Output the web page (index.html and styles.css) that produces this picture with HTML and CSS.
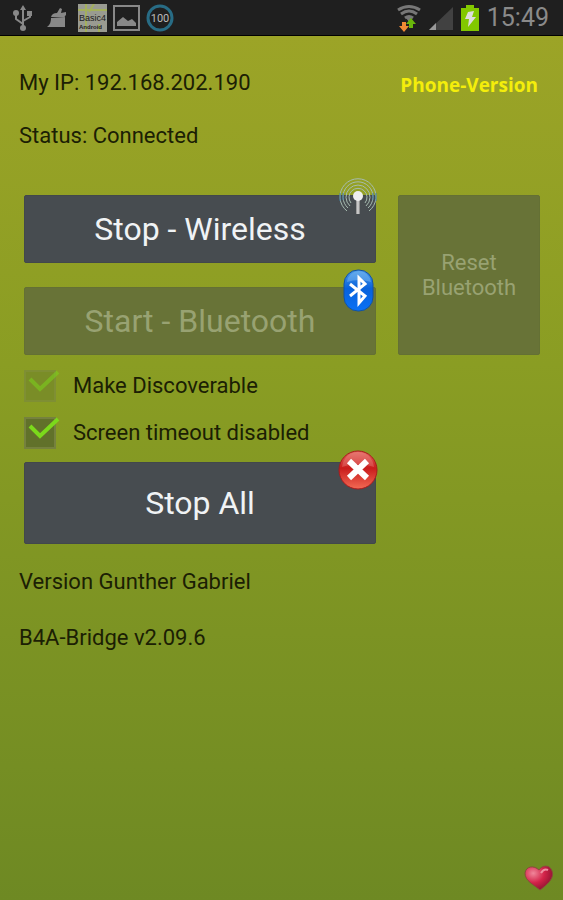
FILE: index.html
```
<!DOCTYPE html>
<html lang="en">
<head>
    <meta charset="UTF-8">
    <meta name="viewport" content="width=device-width, initial-scale=1">
    <title>B4A-Bridge</title>
    <link rel="stylesheet" href="styles.css">
</head>
<body>
    <header class="status-bar">
        <div class="status-group notifications">
            <svg width="22" height="28" viewBox="0 0 22 28" fill="none" stroke="#888" stroke-width="2">
                <path d="M11 4v20M11 20l-7-5V9M11 17l7-4V9"/>
                <path d="M11 1l3 5H8zM15 7h5v5h-5z" fill="#888" stroke="none"/>
                <circle cx="4" cy="9" r="3" fill="#888" stroke="none"/>
                <circle cx="11" cy="24" r="3" fill="#888" stroke="none"/>
            </svg>
            <svg width="22" height="28" viewBox="0 0 22 28" fill="#888">
                <path d="M5 13q1-4 6-4l3-5 2 1-1 4 5-1v3q-2 1-1 3z"/>
                <path d="M5 14h14v9H1c3-2 4-5 4-9z"/>
            </svg>
            <svg width="29" height="28" viewBox="0 0 29 28">
                <path d="M0 0h29v28H0z" fill="#999b91"/>
                <path d="M8 0v28M0 6h29M16 0l-5 8M21 20v8" stroke="#a3b05c" stroke-width="2"/>
                <text class="app-text" x="1" y="17" font-size="9">Basic4</text>
                <text class="app-text app-text-bold" x="1" y="25" font-size="6">Android</text>
            </svg>
            <svg width="27" height="28" viewBox="0 0 27 28">
                <path d="M1 2h25v24H1z" fill="none" stroke="#888" stroke-width="2"/>
                <path d="M4 22v-4l6-5 5 4 4-2 4 4v3z" fill="#888"/>
            </svg>
            <svg width="28" height="28" viewBox="0 0 28 28">
                <circle cx="14" cy="14" r="12" fill="none" stroke="#286c85" stroke-width="3"/>
                <text class="level-text" x="14" y="18" text-anchor="middle" font-size="11">100</text>
            </svg>
        </div>
        <div class="status-group system">
            <svg width="24" height="28" viewBox="0 0 24 28" fill="none" stroke="#777" stroke-width="3">
                <path d="M1 6q11-7 22 0M4 10q8-6 16 0M8 14q4-3 8 0"/>
                <path d="M9 14h6l-3 4z" fill="#777" stroke="none"/>
                <path d="M5 18h4v4h3l-5 6-5-6h3z" fill="#f08a35" stroke="none"/>
                <path d="M12 24v-4H9l5-6 5 6h-3v4z" fill="#69b60b" stroke="none"/>
            </svg>
            <svg width="24" height="28" viewBox="0 0 24 28">
                <path d="M0 26L24 3v23z" fill="#414141"/>
                <path d="M0 26l7-7v7z" fill="#999"/>
            </svg>
            <svg width="18" height="28" viewBox="0 0 18 28">
                <path d="M5 1h8v3h5v23H0V4h5z" fill="#82c800"/>
                <path d="M7 8l6-1-2 6h4L7 23l1-8H4z" fill="#ddd"/>
            </svg>
            <time class="clock">15:49</time>
        </div>
    </header>

    <main class="screen">
        <div class="info">
            <p>My IP: 192.168.202.190</p>
            <strong class="edition">Phone-Version</strong>
        </div>
        <p class="info">Status: Connected</p>

        <div class="controls">
            <div class="button-wrap">
                <button type="button">Stop - Wireless</button>
                <svg class="badge" width="40" height="44" viewBox="0 0 40 44">
                    <defs>
                        <linearGradient id="pole">
                            <stop offset="0" stop-color="#888"/>
                            <stop offset=".5" stop-color="#ddd"/>
                            <stop offset="1" stop-color="#777"/>
                        </linearGradient>
                    </defs>
                    <g fill="none" stroke="#a7bcb0" stroke-width="1">
                        <path d="M9 35a18 18 0 1 1 22 0"/>
                        <path d="M10 32a15 15 0 1 1 20 0"/>
                        <path d="M12 30a12 12 0 1 1 16 0"/>
                        <path d="M13 27a9 9 0 1 1 14 0"/>
                    </g>
                    <path d="M2 17v8M5 17v7M35 17v7M38 17v8" stroke="#3e7ca0" stroke-width="1"/>
                    <path d="M18 24h4v14h-4z" fill="url(#pole)"/>
                    <circle cx="20" cy="20" r="5" fill="#eee"/>
                </svg>
            </div>
            <button class="reset" type="button" disabled>Reset<br>Bluetooth</button>
            <div class="button-wrap">
                <button type="button" disabled>Start - Bluetooth</button>
                <svg class="badge" width="40" height="44" viewBox="0 0 40 44">
                    <defs>
                        <linearGradient id="blue" x2="0" y2="1">
                            <stop offset="0" stop-color="#4a9be8"/>
                            <stop offset=".45" stop-color="#0862dc"/>
                            <stop offset="1" stop-color="#0871f5"/>
                        </linearGradient>
                    </defs>
                    <rect x="6" y="2" width="29" height="41" rx="14" fill="url(#blue)" stroke="#14539f"/>
                    <path d="M9 14q1-10 12-11 10 1 12 11-12-4-24 0z" fill="#8fc5f2" opacity=".4"/>
                    <path d="M12 16l15 12-6 7V10l6 6-15 12" fill="none" stroke="#fff" stroke-width="3"/>
                </svg>
            </div>
        </div>

        <div class="options">
            <label class="option">
                <span class="check">
                    <input type="checkbox" checked disabled>
                    <svg class="tick" width="36" height="32" viewBox="0 0 36 32"><path d="M6 9l10 10L34 2"/></svg>
                </span>
                Make Discoverable
            </label>
            <label class="option">
                <span class="check">
                    <input type="checkbox" checked>
                    <svg class="tick" width="36" height="32" viewBox="0 0 36 32"><path d="M6 9l10 10L34 2"/></svg>
                </span>
                Screen timeout disabled
            </label>
        </div>

        <div class="controls">
            <div class="button-wrap">
                <button class="stop-all" type="button">Stop All</button>
                <svg class="badge" width="40" height="44" viewBox="0 0 40 44">
                    <defs>
                        <linearGradient id="red" x2="0" y2="1">
                            <stop offset="0" stop-color="#e46a62"/>
                            <stop offset=".45" stop-color="#c91b1b"/>
                            <stop offset="1" stop-color="#f26a54"/>
                        </linearGradient>
                    </defs>
                    <circle cx="20" cy="21" r="19" fill="url(#red)" stroke="#a91a1c"/>
                    <path d="M4 18q2-14 16-15 14 1 16 15-16-6-32 0z" fill="#f3a09a" opacity=".3"/>
                    <path d="M11 12l18 17M29 12L11 29" stroke="#fff" stroke-width="6"/>
                </svg>
            </div>
        </div>

        <footer class="about">
            <p>Version Gunther Gabriel</p>
            <p>B4A-Bridge v2.09.6</p>
        </footer>

        <svg class="heart" width="30" height="28" viewBox="0 0 30 28">
            <defs>
                <radialGradient id="heart" cx=".3" cy=".3" r=".8">
                    <stop offset="0" stop-color="#f0869a"/>
                    <stop offset=".5" stop-color="#d32349"/>
                    <stop offset="1" stop-color="#86102e"/>
                </radialGradient>
            </defs>
            <path d="M15 6C18 1 25 1 27 5c5 8-3 15-11 21C9 20 1 17 1 9 2 2 10 1 15 6z" fill="url(#heart)" stroke="#8b4a3c"/>
            <path d="M17 9q3-5 7-3" fill="none" stroke="#ee8ca0" stroke-width="2"/>
        </svg>
    </main>
</body>
</html>
```
FILE: styles.css
```
* {
    box-sizing: border-box;
}

body {
    display: flex;
    flex-direction: column;
    min-height: 100vh;
    margin: 0;
    font-family: Roboto, Arial, sans-serif;
    font-size: 22px;
    color: #1b2004;
    background-color: #8c9e22;
}

p {
    margin: 0;
}

/* Status bar */
.status-bar {
    display: flex;
    justify-content: space-between;
    height: 36px;
    padding: 0 14px 0 12px;
    background-color: #1f1f1f;
    border-bottom: 1px solid #000;
}

.status-group {
    display: flex;
    align-items: center;
}

.notifications {
    gap: 6px;
}

.notifications svg:nth-child(2) {
    margin: 0 4px 0 6px;
}

.system {
    gap: 8px;
}

.clock {
    font-size: 25px;
    color: #8a8a8a;
}

.app-text {
    font-family: "Liberation Sans", sans-serif;
    fill: #202020;
}

.app-text-bold {
    font-weight: bold;
}

.level-text {
    fill: #bbb;
}

/* Main screen */
.screen {
    flex: 1;
    display: flex;
    flex-direction: column;
    padding: 20px 19px 8px;
    background: linear-gradient(#9ca427, #8a9d23 38%, #6e8923);
}

.info {
    display: flex;
    justify-content: space-between;
    align-items: center;
    line-height: 53px;
}

.edition {
    padding: 6px 6px 0 0;
    font-family: "Open Sans", sans-serif;
    font-size: 19px;
    line-height: 47px;
    color: #f4ee0b;
}

.controls {
    display: grid;
    grid-template-columns: 352fr 142fr;
    gap: 24px 22px;
    padding: 0 4px 0 5px;
}

.info + .controls {
    margin-top: 33px;
}

.button-wrap {
    position: relative;
}

button {
    display: block;
    width: 100%;
    height: 68px;
    padding: 0;
    border: 1px solid #42484b;
    border-radius: 2px;
    background-color: #474c50;
    color: #f0f3f5;
    font-family: inherit;
    font-size: 32px;
    line-height: 36px;
    cursor: pointer;
}

button:disabled {
    border-color: #647034;
    background-color: #687337;
    color: #98a272;
    cursor: default;
}

.reset {
    grid-row: span 2;
    height: auto;
    font-size: 22px;
    line-height: 25px;
}

.stop-all {
    height: 82px;
}

.badge {
    position: absolute;
    top: -19px;
    right: -2px;
    pointer-events: none;
}

.button-wrap .stop-all + .badge {
    top: -13px;
}

.options {
    padding: 7px 5px 6px;
}

.option {
    display: flex;
    align-items: center;
    gap: 17px;
    height: 47px;
}

.check {
    position: relative;
    display: flex;
}

.check input {
    appearance: none;
    width: 32px;
    height: 32px;
    margin: 0;
    border: 2px solid #75813e;
    background-color: #61712a;
}

.check input:disabled {
    border-color: #7f8f34;
    background-color: #7a8d27;
}

.tick {
    position: absolute;
    top: 0;
    left: 0;
    fill: none;
    stroke: #7bd91b;
    stroke-width: 4px;
}

.check input:disabled + .tick {
    opacity: 0.5;
}

.about {
    padding-top: 10px;
    line-height: 56px;
}

.heart {
    align-self: flex-end;
    margin: auto -10px 0 0;
}
```
